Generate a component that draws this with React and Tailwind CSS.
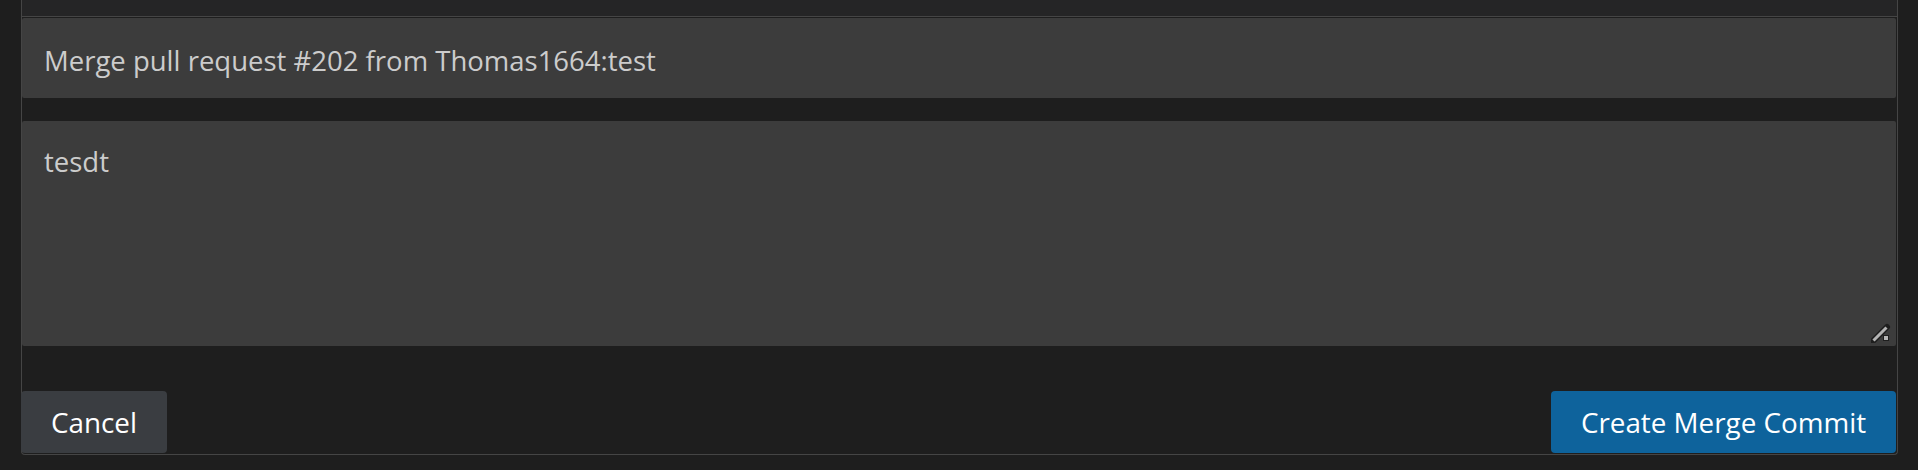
import React from 'react';

const font = { fontFamily: '"Open Sans", "Noto Sans", sans-serif' };

const ResizeGrip = () => (
  <svg className="absolute right-[5px] bottom-[3px] pointer-events-none" width="20" height="20" viewBox="0 0 20 20">
    <line x1="2" y1="18" x2="16" y2="4" stroke="#1e1e1e" strokeWidth="6" strokeLinecap="round" />
    <line x1="2.5" y1="17.5" x2="15.5" y2="4.5" stroke="#b4b4b4" strokeWidth="3" />
    <rect x="12" y="12" width="6" height="6" fill="#1e1e1e" />
    <rect x="13" y="13" width="4" height="4" fill="#b4b4b4" />
  </svg>
);

const MergeCommitForm = () => {
  return (
    <div className="w-[1918px] h-[470px] bg-[#1e1e1e] overflow-hidden" style={font}>
      <div className="ml-[21px] w-[1877px] border-x border-b border-[#454545] rounded-b-[4px] flex flex-col">
        {/* tail of the panel above */}
        <div className="h-[17px] bg-[#252526] border-b border-[#454545]" />

        <div className="pt-px">
          <input
            type="text"
            readOnly
            value="Merge pull request #202 from Thomas1664:test"
            className="block w-[1874px] h-[80px] pt-[4px] px-[22px] bg-[#3c3c3c] text-[#cccccc] text-[27.5px] rounded-[2px] outline-none"
          />
        </div>

        <div className="relative mt-[23px] w-[1874px]">
          <textarea
            readOnly
            value="tesdt"
            className="block w-full h-[225px] pt-[20px] px-[22px] bg-[#3c3c3c] text-[#cccccc] text-[27.5px] leading-[41px] rounded-[2px] outline-none resize-none"
          />
          <ResizeGrip />
        </div>

        <div className="mt-[45px] -ml-px flex items-center justify-between pb-px">
          <button className="w-[146px] h-[62px] pt-[2px] bg-[#3a3d41] text-white text-[27.8px] rounded-[4px]">
            Cancel
          </button>
          <button className="w-[345px] h-[62px] pt-[2px] mr-px bg-[#0e639c] text-white text-[27.8px] rounded-[4px]">
            Create Merge Commit
          </button>
        </div>
      </div>
    </div>
  );
};

export default function App() {
  return <MergeCommitForm />;
}
